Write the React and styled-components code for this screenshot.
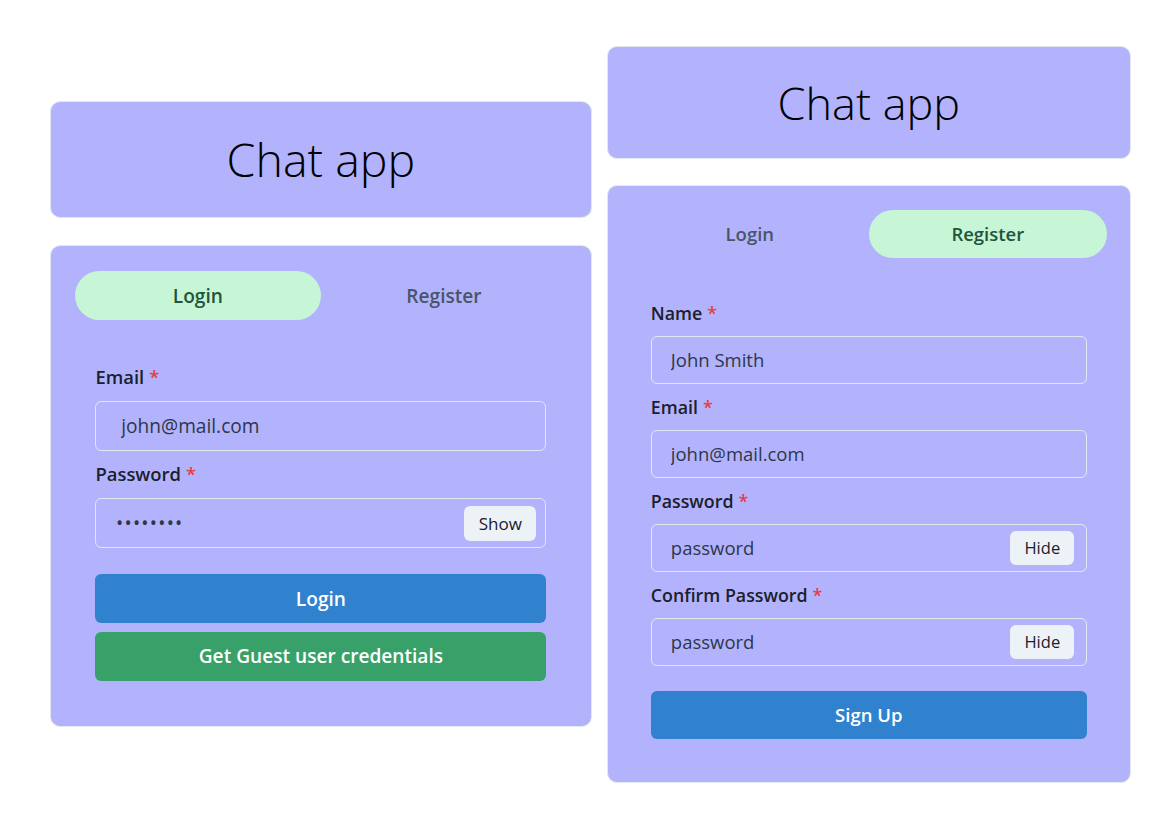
import React from 'react';
import styled, { createGlobalStyle } from 'styled-components';

const GlobalStyle = createGlobalStyle`
  html, body { margin: 0; padding: 0; background: #ffffff; }
  body { font-family: "Open Sans", "Noto Sans", sans-serif; color: #1a202c; }
  * { box-sizing: border-box; }
`;

const LAVENDER = '#b3b3fd';

const Page = styled.div`
  height: 838px;
  display: flex;
  align-items: center;
  gap: 15px;
  padding: 0 0 10px 50px;
`;

const Column = styled.div`
  width: 524px;
  display: flex;
  flex-direction: column;
  gap: 26px;
  zoom: ${(p) => p.$zoom || 1};
`;

const Header = styled.div`
  height: 113px;
  background: ${LAVENDER};
  border: 1px solid #e2e8f0;
  border-radius: 10px;
  display: flex;
  align-items: center;
  justify-content: center;
`;

const Title = styled.h1`
  margin: 0;
  font-family: "Open Sans", sans-serif;
  font-weight: 300;
  font-size: 45px;
  line-height: 1;
  color: #000;
`;

const Card = styled.div`
  background: ${LAVENDER};
  border: 1px solid #e2e8f0;
  border-radius: 10px;
  padding: 24px 23px 23px 23px;
`;

const Tabs = styled.div`
  display: flex;
`;

const Tab = styled.button`
  flex: 1;
  height: 48px;
  border: none;
  border-radius: 999px;
  background: ${(p) => (p.$active ? '#c6f6d5' : 'transparent')};
  color: ${(p) => (p.$active ? '#22543d' : '#4a5568')};
  font-family: inherit;
  font-size: 18.5px;
  font-weight: 600;
  cursor: pointer;
`;

const Panel = styled.div`
  padding: 44px 20px 20px 20px;
  display: flex;
  flex-direction: column;
`;

const Fields = styled.div`
  display: flex;
  flex-direction: column;
  gap: 12px;
`;

const Field = styled.div`
  display: flex;
  flex-direction: column;
`;

const Label = styled.label`
  font-size: 17.8px;
  font-weight: 600;
  line-height: 22px;
  margin-bottom: 12px;
  color: #1a202c;
`;

const Star = styled.span`
  color: #e53e3e;
  margin-left: 5px;
`;

const InputBox = styled.div`
  height: 48px;
  border: 1px solid #e2e8f0;
  border-radius: 6px;
  display: flex;
  align-items: center;
`;

const TextInput = styled.input`
  flex: 1;
  min-width: 0;
  height: 100%;
  border: none;
  outline: none;
  background: transparent;
  padding: 0 0 0 ${(p) => p.$pl || 19}px;
  font-family: inherit;
  font-size: 18.5px;
  color: #2d3748;
  letter-spacing: ${(p) => (p.type === 'password' ? '1.2px' : 'normal')};
`;

const RightElement = styled.div`
  width: 87px;
  height: 100%;
  display: flex;
  align-items: center;
  justify-content: center;
`;

const SmallButton = styled.button`
  height: 34px;
  padding: 0 14px;
  border: none;
  border-radius: 6px;
  background: #edf2f7;
  color: #1a202c;
  font-family: inherit;
  font-size: 16.5px;
  font-weight: 500;
`;

const ActionButton = styled.button`
  height: 48px;
  width: 100%;
  margin-top: ${(p) => p.$mt}px;
  border: none;
  border-radius: 6px;
  background: ${(p) => p.$bg};
  color: #ffffff;
  font-family: inherit;
  font-size: 18.5px;
  font-weight: 600;
`;

function FormField({ label, value, type = 'text', pl, action }) {
  return (
    <Field>
      <Label>
        {label}
        <Star>*</Star>
      </Label>
      <InputBox>
        <TextInput type={type} defaultValue={value} $pl={pl} />
        {action && (
          <RightElement>
            <SmallButton>{action}</SmallButton>
          </RightElement>
        )}
      </InputBox>
    </Field>
  );
}

function LoginColumn() {
  return (
    <Column $zoom={1.034}>
      <Header>
        <Title>Chat app</Title>
      </Header>
      <Card>
        <Tabs>
          <Tab $active>Login</Tab>
          <Tab>Register</Tab>
        </Tabs>
        <Panel>
          <Fields>
            <FormField label="Email" value="john@mail.com" pl={24} />
            <FormField label="Password" value="password" type="password" action="Show" />
          </Fields>
          <ActionButton $bg="#3182ce" $mt={25}>Login</ActionButton>
          <ActionButton $bg="#38a169" $mt={8}>Get Guest user credentials</ActionButton>
        </Panel>
      </Card>
    </Column>
  );
}

function RegisterColumn() {
  return (
    <Column>
      <Header>
        <Title>Chat app</Title>
      </Header>
      <Card>
        <Tabs>
          <Tab>Login</Tab>
          <Tab $active>Register</Tab>
        </Tabs>
        <Panel>
          <Fields>
            <FormField label="Name" value="John Smith" />
            <FormField label="Email" value="john@mail.com" />
            <FormField label="Password" value="password" action="Hide" />
            <FormField label="Confirm Password" value="password" action="Hide" />
          </Fields>
          <ActionButton $bg="#3182ce" $mt={25}>Sign Up</ActionButton>
        </Panel>
      </Card>
    </Column>
  );
}

export default function App() {
  return (
    <>
      <GlobalStyle />
      <Page>
        <LoginColumn />
        <RegisterColumn />
      </Page>
    </>
  );
}
